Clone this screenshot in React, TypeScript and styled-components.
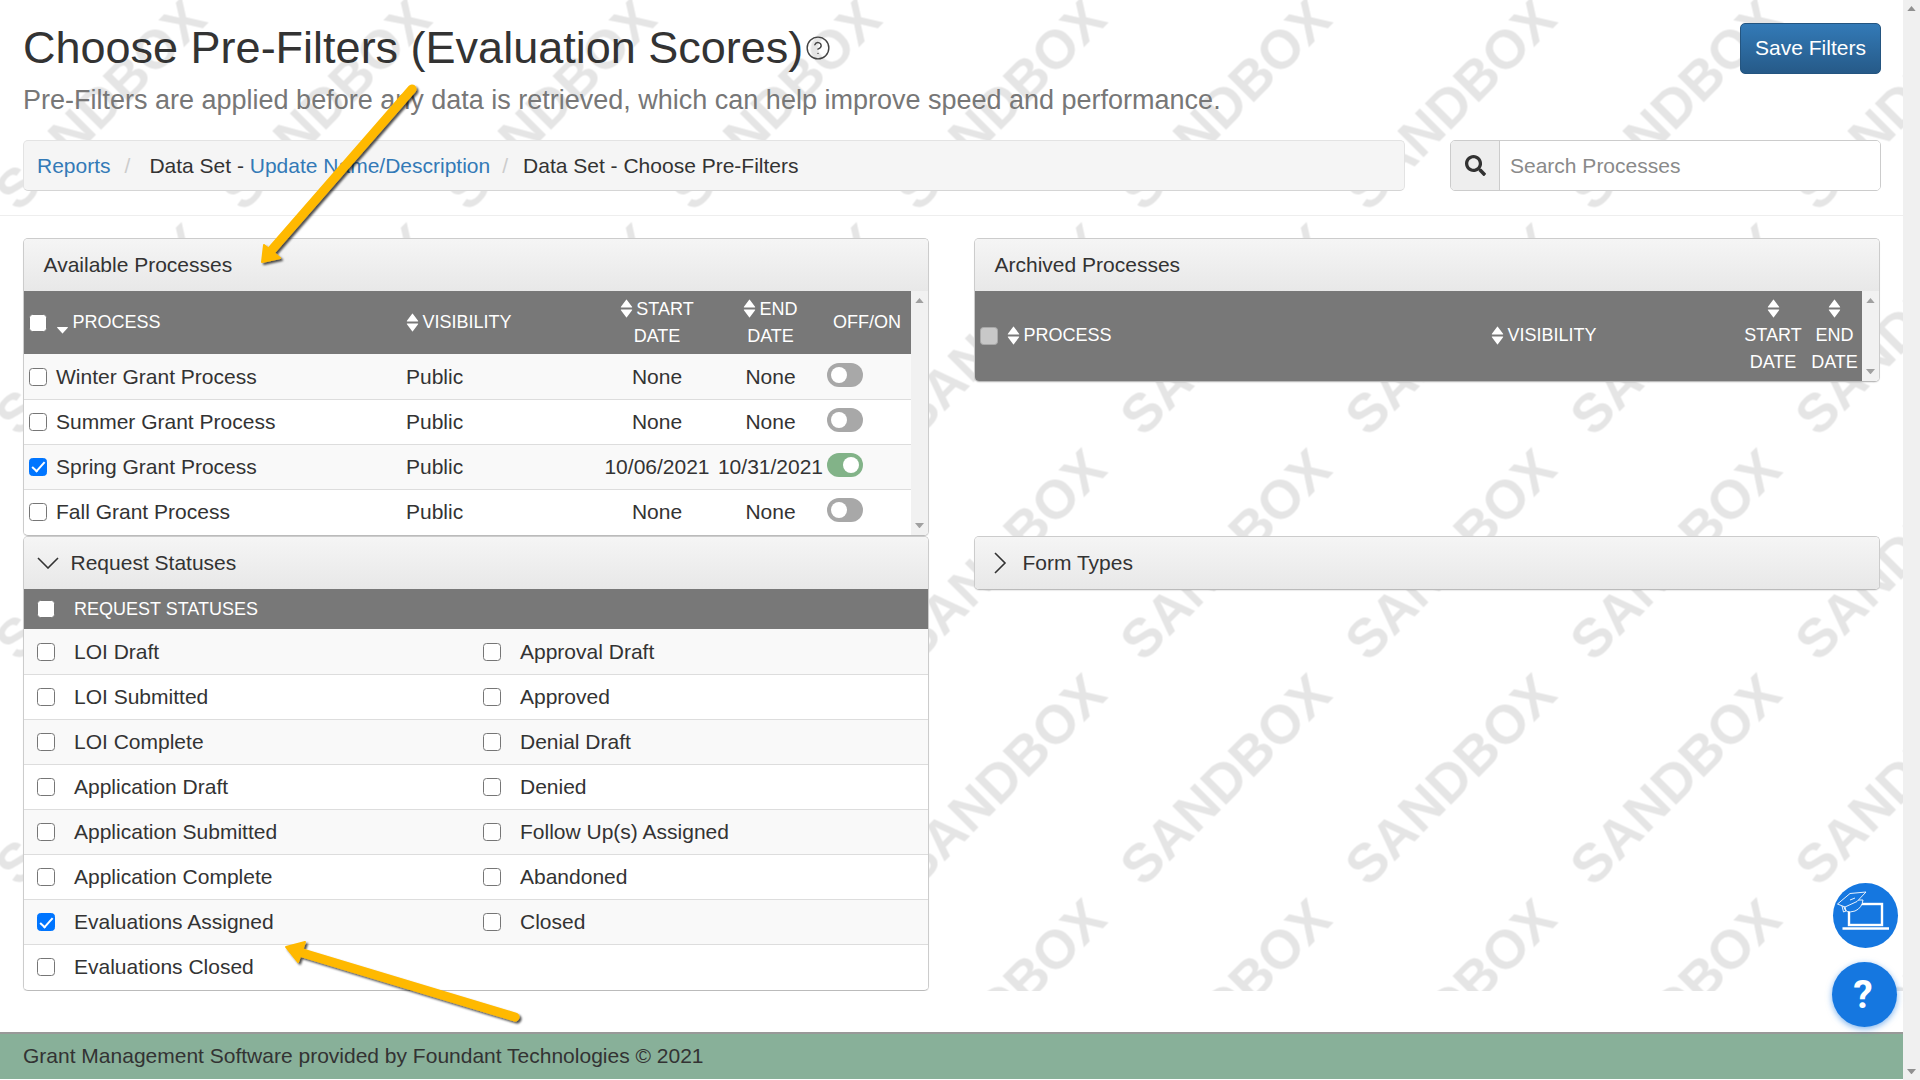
import React from 'react';
import styled, { createGlobalStyle } from 'styled-components';
import { CircleHelp } from 'lucide-react';
import { FaSearch } from 'react-icons/fa';

const GlobalStyle = createGlobalStyle`
  html, body { margin: 0; padding: 0; height: 100%; overflow: hidden; }
  body { background: #fff; color: #333; font-family: "Liberation Sans", Arial, sans-serif; }
  * { box-sizing: border-box; }
`;

const Page = styled.div`
  position: relative;
  display: flex;
  width: 1920px;
  height: 1080px;
  overflow: hidden;
`;

const Main = styled.div`
  flex: 1;
  display: flex;
  flex-direction: column;
  min-width: 0;
`;

const Content = styled.div`
  position: relative;
  height: 991px;
  padding: 0 23px 0 23px;
  overflow: hidden;
`;

const WatermarkLayer = styled.svg`
  position: absolute;
  inset: 0;
  width: 100%;
  height: 100%;
`;

const Foreground = styled.div`
  position: relative;
`;

const Head = styled.div`
  display: flex;
  justify-content: space-between;
  align-items: flex-start;
  height: 140px;
  margin-right: -1px;
`;

const Title = styled.h1`
  margin: 0;
  padding-top: 21px;
  display: flex;
  align-items: center;
  font-size: 45px;
  line-height: 54px;
  font-weight: 400;
  color: #333;
  svg { margin: 0 0 0 2px; color: #444; }
`;

const Subtitle = styled.p`
  margin: 0;
  font-size: 27px;
  line-height: 50px;
  color: #777;
`;

const SaveButton = styled.button`
  margin-top: 23px;
  width: 141px;
  height: 51px;
  padding: 0 0 2px;
  border: 1px solid #245580;
  border-radius: 5px;
  background: linear-gradient(#337ab7, #265a88);
  color: #fff;
  font: 21px "Liberation Sans", Arial, sans-serif;
`;

const NavRow = styled.div`
  display: flex;
  justify-content: space-between;
  height: 51px;
  margin-right: -1px;
`;

const Breadcrumb = styled.nav`
  width: 1382px;
  display: flex;
  align-items: center;
  padding-left: 13px;
  background: #f5f5f5;
  border: 1px solid #e3e3e3;
  border-bottom-color: #d5d5d5;
  border-radius: 5px;
  font-size: 21px;
  color: #333;
`;

const Crumb = styled.a`
  color: #337ab7;
  text-decoration: none;
`;

const CrumbSep = styled.span<{ $tight?: boolean }>`
  margin: ${p => (p.$tight ? '0 15px 0 12px' : '0 19px 0 14px')};
  color: #ccc;
`;

const SearchGroup = styled.div`
  width: 431px;
  display: flex;
  border: 1px solid #ccc;
  border-radius: 5px;
  overflow: hidden;
  background: #fff;
`;

const SearchAddon = styled.div`
  width: 49px;
  display: flex;
  align-items: center;
  justify-content: center;
  background: #eee;
  border-right: 1px solid #ccc;
  color: #333;
`;

const SearchInput = styled.input`
  flex: 1;
  min-width: 0;
  border: 0;
  outline: 0;
  padding: 0 10px;
  background: #fff;
  color: #333;
  font: 21px "Liberation Sans", Arial, sans-serif;
  &::placeholder { color: #8a8a8a; opacity: 1; }
`;

const Rule = styled.hr`
  margin: 24px -23px 22px;
  border: 0;
  border-top: 1px solid #eee;
`;

const Columns = styled.div`
  display: grid;
  grid-template-columns: 906px 906px;
  gap: 45px;
  align-items: start;
`;

const Panel = styled.section`
  background: #fff;
  border: 1px solid #ccc;
  border-bottom-color: #bbb;
  border-radius: 5px;
  overflow: hidden;
  box-shadow: 0 1px 1px rgba(0, 0, 0, 0.08);
`;

const FormTypesPanel = styled(Panel)`
  margin-top: 154px;
`;

const PanelHeading = styled.div`
  height: 52px;
  display: flex;
  align-items: center;
  padding-left: 19.5px;
  background: linear-gradient(#f5f5f5, #e8e8e8);
  font-size: 21px;
  color: #333;
`;

const DownChevron = styled.svg`
  flex: none;
  fill: none;
  stroke: #333;
  stroke-width: 1.6;
  margin: 0 12px 0 -7px;
`;

const RightChevron = styled(DownChevron)`
  margin: 0 16px 0 -1px;
`;

const TableWrap = styled.div`
  display: flex;
`;

const ProcessTable = styled.table`
  flex: 1;
  align-self: flex-start;
  border-collapse: collapse;
  table-layout: fixed;
  font-size: 21px;
`;

const AvailableTable = styled(ProcessTable)`
  margin-bottom: 1px;
`;

const HeadCell = styled.th<{ $center?: boolean; $inset?: boolean }>`
  padding: ${p => (p.$inset ? '0 4px 0 0' : '0')};
  background: #787878;
  color: #fff;
  font-size: 18px;
  line-height: 27px;
  font-weight: 400;
  text-align: ${p => (p.$center ? 'center' : 'left')};
  vertical-align: middle;
`;

const ArchivedHeadCell = styled(HeadCell)`
  padding-bottom: 2px;
`;

const HeadRow = styled.tr<{ $height: number }>`
  height: ${p => p.$height}px;
`;

const BodyRow = styled.tr`
  height: 45px;
  &:nth-child(odd) td { background: #f9f9f9; }
  & + & td { box-shadow: inset 0 1px 0 #ddd; }
`;

const Cell = styled.td<{ $center?: boolean }>`
  padding: 0;
  background: #fff;
  color: #333;
  white-space: nowrap;
  text-align: ${p => (p.$center ? 'center' : 'left')};
  vertical-align: middle;
`;

const ProcessCell = styled.div`
  display: flex;
  align-items: center;
  gap: 9px;
  padding-left: 5px;
`;

const HeadLabel = styled.span`
  display: flex;
  align-items: center;
  gap: 3.5px;
`;

const SortLine = styled.span`
  display: flex;
  align-items: center;
  justify-content: center;
  height: 27px;
`;

const InlineSort = styled.svg`
  flex: none;
  vertical-align: -4px;
  margin-right: 3px;
`;

const FlexSort = styled.svg`
  flex: none;
`;

const SortDown = styled.svg`
  flex: none;
  margin-top: 6px;
`;

const Box = styled.input`
  appearance: none;
  position: relative;
  flex: none;
  width: 18px;
  height: 18px;
  margin: 0;
  background: #fff;
  border: 1.4px solid #767676;
  border-radius: 3.5px;
  &:checked {
    background: #0075ff;
    border-color: #0075ff;
  }
  &:checked::after {
    content: '';
    position: absolute;
    left: 4.6px;
    top: 0.8px;
    width: 5.4px;
    height: 10.6px;
    border: solid #fff;
    border-width: 0 2.4px 2.4px 0;
    transform: rotate(42deg);
  }
  &:disabled {
    background: #c8c8c8;
    border-color: #a9a9a9;
  }
`;

const ArchivedBox = styled(Box)`
  margin-top: 2px;
`;

const Toggle = styled.span<{ $on?: boolean }>`
  display: block;
  position: relative;
  top: -2px;
  width: 36px;
  height: 24px;
  border-radius: 12px;
  background: ${p => (p.$on ? '#82b388' : '#a8a8a8')};
  &::after {
    content: '';
    position: absolute;
    top: 4px;
    left: ${p => (p.$on ? '16px' : '4px')};
    width: 16px;
    height: 16px;
    border-radius: 50%;
    background: #fff;
  }
`;

const TableScroll = styled.div`
  flex: none;
  width: 17px;
  display: flex;
  flex-direction: column;
  justify-content: space-between;
  align-items: center;
  padding: 7px 0;
  background: #f1f1f1;
`;

const StatusBar = styled.div`
  height: 40px;
  display: flex;
  align-items: center;
  gap: 19px;
  padding-left: 13px;
  background: #787878;
  color: #fff;
  font-size: 18px;
`;

const StatusList = styled.div`
  padding-bottom: 1px;
`;

const StatusRow = styled.div`
  height: 45px;
  display: grid;
  grid-template-columns: 446px 1fr;
  background: #fff;
  font-size: 21px;
  color: #333;
  &:nth-child(odd) { background: #f9f9f9; }
  & + & { border-top: 1px solid #ddd; }
`;

const StatusCell = styled.label`
  display: flex;
  align-items: center;
  gap: 19px;
  padding-left: 13px;
`;

const Footer = styled.footer`
  margin-top: 41px;
  height: 47px;
  display: flex;
  align-items: center;
  padding: 0 0 2px 23px;
  background: #88b099;
  border-top: 2px solid #999;
  font-size: 21px;
  color: #333;
`;

const PageScroll = styled.div`
  flex: none;
  width: 17px;
  display: flex;
  flex-direction: column;
  justify-content: space-between;
  align-items: center;
  padding: 6px 0;
  background: #f0f0f0;
`;

const ArrowLayer = styled.svg`
  position: absolute;
  top: 0;
  left: 0;
  pointer-events: none;
`;

const RoundButton = styled.button`
  position: absolute;
  width: 65px;
  height: 65px;
  padding: 0;
  border: 0;
  border-radius: 50%;
  display: flex;
  align-items: center;
  justify-content: center;
  background: #1577e0;
  color: #fff;
`;

const LaptopButton = styled(RoundButton)`
  top: 883px;
  right: 22px;
`;

const HelpButton = styled(RoundButton)`
  top: 962px;
  right: 23px;
  padding-right: 3px;
  font: 700 39px Roboto, "Liberation Sans", sans-serif;
  box-shadow: 0 2px 6px rgba(21, 119, 224, 0.55);
`;

const ScrollArrow = ({ up, color = '#a0a0a0' }: { up?: boolean; color?: string }) => (
  <svg width="9" height="5.4" viewBox="0 0 10 6" fill={color}>
    <path d={up ? 'M5 0L10 6H0z' : 'M0 0H10L5 6z'} />
  </svg>
);

const sortPath =
  'M1 9h10q.8 0 .3-.7l-5-6.6q-.3-.4-.6 0l-5 6.6Q.2 9 1 9zM1 11h10q.8 0 .3.7l-5 6.6q-.3.4-.6 0l-5-6.6Q.2 11 1 11z';

const SortInline = () => (
  <InlineSort width="13" height="21" viewBox="0 0 12 20" fill="#fff"><path d={sortPath} /></InlineSort>
);

const SortFlex = () => (
  <FlexSort width="13" height="21" viewBox="0 0 12 20" fill="#fff"><path d={sortPath} /></FlexSort>
);

const SortDescending = () => (
  <SortDown width="13" height="20" viewBox="0 0 12 20" fill="#fff">
    <path d="M1 11h10q.8 0 .3.7l-5 5.6q-.3.4-.6 0l-5-5.6Q.2 11 1 11z" />
  </SortDown>
);

const processes = [
  { name: 'Winter Grant Process', start: 'None', end: 'None', on: false },
  { name: 'Summer Grant Process', start: 'None', end: 'None', on: false },
  { name: 'Spring Grant Process', start: '10/06/2021', end: '10/31/2021', on: true },
  { name: 'Fall Grant Process', start: 'None', end: 'None', on: false },
];

const statuses: [string, string | null, boolean][] = [
  ['LOI Draft', 'Approval Draft', false],
  ['LOI Submitted', 'Approved', false],
  ['LOI Complete', 'Denial Draft', false],
  ['Application Draft', 'Denied', false],
  ['Application Submitted', 'Follow Up(s) Assigned', false],
  ['Application Complete', 'Abandoned', false],
  ['Evaluations Assigned', 'Closed', true],
  ['Evaluations Closed', null, false],
];

const Watermark = () => (
  <WatermarkLayer aria-hidden="true">
    <defs>
      <pattern
        id="sandbox"
        width="225"
        height="225"
        patternUnits="userSpaceOnUse"
        patternTransform="translate(-12.5 -8.5)"
      >
        <text
          x="112.5"
          y="112.5"
          dy="19"
          transform="rotate(-45 112.5 112.5)"
          textAnchor="middle"
          fill="#e5e5e5"
          fontFamily="Liberation Sans, Arial, sans-serif"
          fontWeight="700"
          fontSize="54"
        >
          SANDBOX
        </text>
      </pattern>
    </defs>
    <rect width="100%" height="100%" fill="url(#sandbox)" />
  </WatermarkLayer>
);

const Arrows = () => (
  <ArrowLayer width="1903" height="1080" viewBox="0 0 1903 1080" aria-hidden="true">
    <defs>
      <filter id="arrowShadow" x="-10%" y="-10%" width="120%" height="120%">
        <feDropShadow dx="2" dy="2" stdDeviation="1.2" floodColor="#000" floodOpacity="0.7" />
      </filter>
    </defs>
    <g fill="#ffb900" stroke="#ffb900" strokeLinejoin="round" strokeLinecap="round" filter="url(#arrowShadow)">
      <path d="M412 89L270 252" strokeWidth="9" fill="none" />
      <path d="M262 262L264 245L280 258z" strokeWidth="2" />
      <path d="M515 1017L296 951" strokeWidth="9" fill="none" />
      <path d="M286 947L305 942L298 962z" strokeWidth="2" />
    </g>
  </ArrowLayer>
);

const LaptopIcon = () => (
  <svg width="65" height="65" viewBox="0 0 65 65" fill="none" stroke="#fff">
    <rect x="16" y="21" width="33" height="21" strokeWidth="2.4" />
    <path d="M9.500 45.500H56" strokeWidth="2.6" />
    <path d="M11 24Q12 31 22 28Q29 25 30 17L17 17z" fill="#1577e0" strokeWidth="0.9" />
    <path d="M4.500 21L17 10.500L33 9L24 18.500L12 24z" fill="#1577e0" strokeWidth="0.9" />
    <path d="M17 17L22 15M9 23L10.500 29L13 28L12 24" strokeWidth="0.9" />
  </svg>
);

export default function App() {
  return (
    <Page>
      <GlobalStyle />
      <Main>
        <Content>
          <Watermark />
          <Foreground>
            <Head>
              <div>
                <Title>
                  Choose Pre-Filters (Evaluation Scores)
                  <CircleHelp size={26} strokeWidth={1.3} />
                </Title>
                <Subtitle>Pre-Filters are applied before any data is retrieved, which can help improve speed and performance.</Subtitle>
              </div>
              <SaveButton>Save Filters</SaveButton>
            </Head>
            <NavRow>
              <Breadcrumb>
                <Crumb href="#">Reports</Crumb>
                <CrumbSep>/</CrumbSep>
                <span>Data Set - <Crumb href="#">Update Name/Description</Crumb></span>
                <CrumbSep $tight>/</CrumbSep>
                <span>Data Set - Choose Pre-Filters</span>
              </Breadcrumb>
              <SearchGroup>
                <SearchAddon><FaSearch size={21} /></SearchAddon>
                <SearchInput placeholder="Search Processes" />
              </SearchGroup>
            </NavRow>
            <Rule />
            <Columns>
              <div>
                <Panel>
                  <PanelHeading>Available Processes</PanelHeading>
                  <TableWrap>
                    <AvailableTable>
                      <colgroup>
                        <col width="382" />
                        <col width="194" />
                        <col width="114" />
                        <col width="113" />
                        <col width="84" />
                      </colgroup>
                      <thead>
                        <HeadRow $height={63}>
                          <HeadCell>
                            <ProcessCell>
                              <Box type="checkbox" aria-label="Select all" />
                              <HeadLabel><SortDescending />PROCESS</HeadLabel>
                            </ProcessCell>
                          </HeadCell>
                          <HeadCell><HeadLabel><SortFlex />VISIBILITY</HeadLabel></HeadCell>
                          <HeadCell $center><SortInline />START<br />DATE</HeadCell>
                          <HeadCell $center><SortInline />END<br />DATE</HeadCell>
                          <HeadCell $center $inset>OFF/ON</HeadCell>
                        </HeadRow>
                      </thead>
                      <tbody>
                        {processes.map(p => (
                          <BodyRow key={p.name}>
                            <Cell>
                              <ProcessCell>
                                <Box type="checkbox" defaultChecked={p.on} aria-label={p.name} />
                                {p.name}
                              </ProcessCell>
                            </Cell>
                            <Cell>Public</Cell>
                            <Cell $center>{p.start}</Cell>
                            <Cell $center>{p.end}</Cell>
                            <Cell><Toggle $on={p.on} /></Cell>
                          </BodyRow>
                        ))}
                      </tbody>
                    </AvailableTable>
                    <TableScroll><ScrollArrow up /><ScrollArrow /></TableScroll>
                  </TableWrap>
                </Panel>
                <Panel>
                  <PanelHeading>
                    <DownChevron width="22" height="12" viewBox="0 0 22 12"><path d="M1 1l10 10L21 1" /></DownChevron>
                    Request Statuses
                  </PanelHeading>
                  <StatusBar>
                    <Box type="checkbox" aria-label="Select all statuses" />
                    REQUEST STATUSES
                  </StatusBar>
                  <StatusList>
                    {statuses.map(([left, right, checked]) => (
                      <StatusRow key={left}>
                        <StatusCell><Box type="checkbox" defaultChecked={checked} />{left}</StatusCell>
                        {right && <StatusCell><Box type="checkbox" />{right}</StatusCell>}
                      </StatusRow>
                    ))}
                  </StatusList>
                </Panel>
              </div>
              <div>
                <Panel>
                  <PanelHeading>Archived Processes</PanelHeading>
                  <TableWrap>
                    <ProcessTable>
                      <colgroup>
                        <col width="516" />
                        <col width="248" />
                        <col width="68" />
                        <col width="55" />
                      </colgroup>
                      <thead>
                        <HeadRow $height={90}>
                          <ArchivedHeadCell>
                            <ProcessCell>
                              <ArchivedBox type="checkbox" disabled aria-label="Select all archived" />
                              <HeadLabel><SortFlex />PROCESS</HeadLabel>
                            </ProcessCell>
                          </ArchivedHeadCell>
                          <ArchivedHeadCell><HeadLabel><SortFlex />VISIBILITY</HeadLabel></ArchivedHeadCell>
                          <ArchivedHeadCell $center><SortLine><SortFlex /></SortLine>START<br />DATE</ArchivedHeadCell>
                          <ArchivedHeadCell $center><SortLine><SortFlex /></SortLine>END<br />DATE</ArchivedHeadCell>
                        </HeadRow>
                      </thead>
                    </ProcessTable>
                    <TableScroll><ScrollArrow up /><ScrollArrow /></TableScroll>
                  </TableWrap>
                </Panel>
                <FormTypesPanel>
                  <PanelHeading>
                    <RightChevron width="13" height="22" viewBox="0 0 13 22"><path d="M1 1l10 10L1 21" /></RightChevron>
                    Form Types
                  </PanelHeading>
                </FormTypesPanel>
              </div>
            </Columns>
          </Foreground>
        </Content>
        <Footer>Grant Management Software provided by Foundant Technologies © 2021</Footer>
      </Main>
      <PageScroll><ScrollArrow up color="#909090" /><ScrollArrow color="#909090" /></PageScroll>
      <Arrows />
      <LaptopButton aria-label="Training"><LaptopIcon /></LaptopButton>
      <HelpButton aria-label="Help">?</HelpButton>
    </Page>
  );
}
